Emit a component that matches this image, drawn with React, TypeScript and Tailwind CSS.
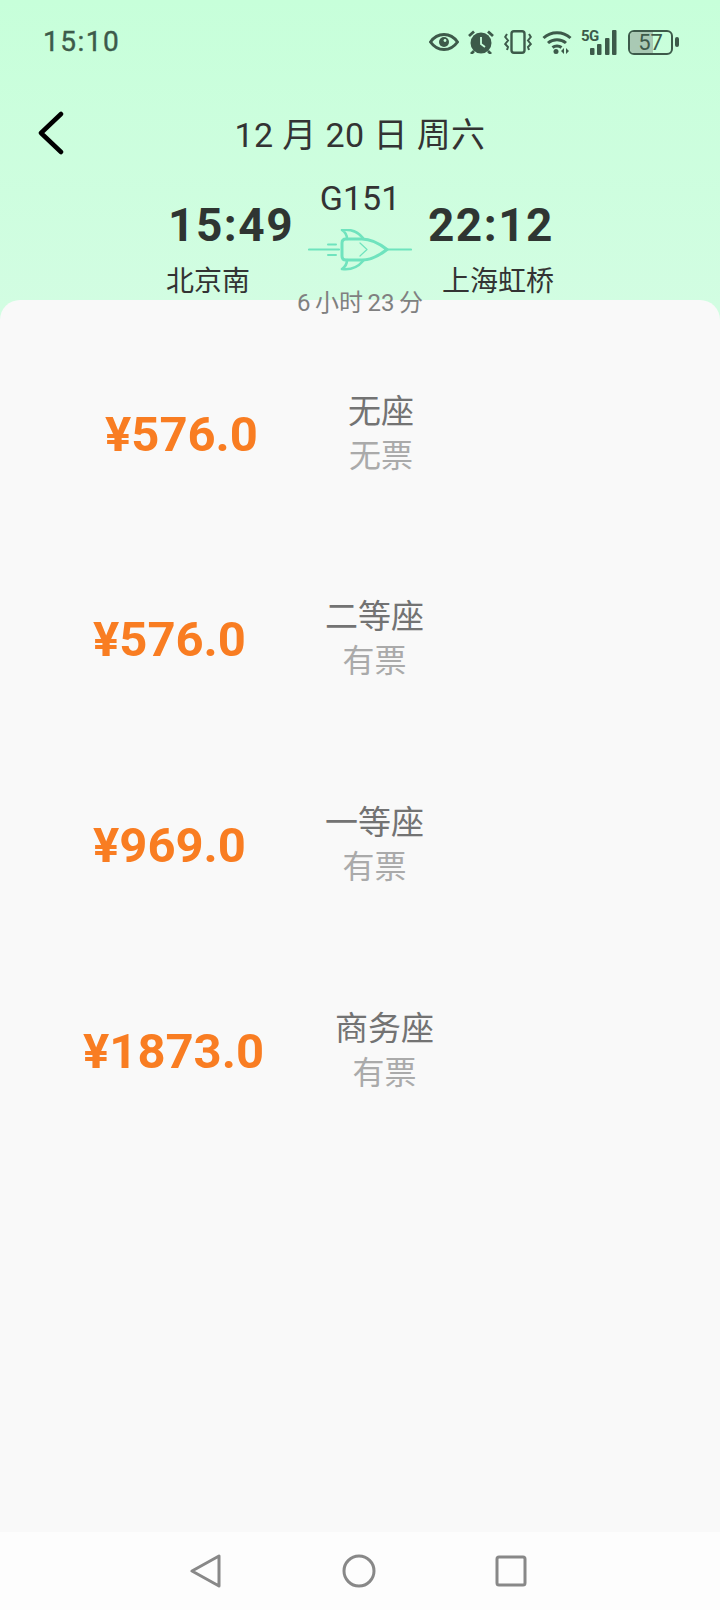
const font = "font-['Roboto','Noto_Sans_CJK_SC',sans-serif]";

const tickets = [
  { price: "¥576.0", seat: "无座", left: "无票", row: "pl-[105px] gap-[90px] h-[88px] mb-[117px]" },
  { price: "¥576.0", seat: "二等座", left: "有票", row: "pl-[93px] gap-[79px] h-[88px] mb-[118px]" },
  { price: "¥969.0", seat: "一等座", left: "有票", row: "pl-[93px] gap-[79px] h-[88px] mb-[118px]" },
  { price: "¥1873.0", seat: "商务座", left: "有票", row: "pl-[83px] gap-[71px] h-[88px]" },
];

const StatusIcons = () => (
  <div className="flex items-center text-[#3d5a4a]">
    <svg width="30" height="18" viewBox="0 0 30 18" className="mr-[9px]">
      <path d="M1.500 9C5 4 9.500 1.500 15 1.500S25 4 28.500 9C25 14 20.500 16.500 15 16.500S5 14 1.500 9Z" fill="none" stroke="currentColor" strokeWidth="3" />
      <circle cx="15" cy="9" r="5" fill="currentColor" />
      <circle cx="16" cy="7.500" r="1.400" fill="#c8ffdc" />
    </svg>
    <svg width="26" height="24" viewBox="0 0 26 24" className="mr-[10px]">
      <circle cx="13" cy="13" r="10.500" fill="currentColor" />
      <path d="M13 7v7l4 3" fill="none" stroke="#c8ffdc" strokeWidth="1.800" />
      <path d="M1 6 6 1.500M25 6 20 1.500M6 21l-3 3M20 21l3 3" stroke="currentColor" strokeWidth="2.800" />
    </svg>
    <svg width="28" height="24" viewBox="0 0 28 24" className="mr-[10px]">
      <rect x="7.500" y="1.200" width="13" height="21.600" rx="2.500" fill="none" stroke="currentColor" strokeWidth="2.400" />
      <path d="M3 4 1.200 7 4 10.500 1.200 14 4 17 3 20M25 4l1.800 3L24 10.500l2.800 3.500L24 17l1 3" fill="none" stroke="currentColor" strokeWidth="2" />
    </svg>
    <svg width="30" height="24" viewBox="0 0 30 24" className="mr-[9px]">
      <path d="M1.500 8C9 1 21 1 28.500 8M6 13c5-4.500 13-4.500 18 0M10.500 17.500c2.500-2 6.500-2 9 0" fill="none" stroke="currentColor" strokeWidth="3" />
      <circle cx="14" cy="21.500" r="2.500" fill="currentColor" />
      <path d="M22 18v6l-3-3ZM24 18v6l3-3Z" fill="currentColor" />
    </svg>
    <div className="relative w-[36px] h-[25px] mr-[11px]">
      <span className="absolute left-0 -top-[1px] text-[15px] leading-[15px] font-bold font-['Roboto',sans-serif] tracking-[-0.5px]">5G</span>
      <svg width="36" height="25" viewBox="0 0 36 25" className="absolute inset-0">
        <rect x="9" y="18" width="4.500" height="7" rx="1" fill="currentColor" />
        <rect x="16" y="14" width="4.500" height="11" rx="1" fill="currentColor" />
        <rect x="24" y="8" width="4.500" height="17" rx="1" fill="currentColor" />
        <rect x="31" y="0" width="4.500" height="25" rx="1" fill="currentColor" />
      </svg>
    </div>
    <div className="relative w-[45px] h-[25px] rounded-[6px] border-2 border-[#3d5a4a] overflow-hidden">
      <div className="absolute left-0 top-0 bottom-0 w-[57%] bg-[#a9c9b4]" />
      <span className="absolute inset-0 text-center text-[22px] leading-[21px] font-['Roboto',sans-serif] text-[#3d5a4a]">57</span>
    </div>
    <div className="ml-[2px] w-[4px] h-[10px] rounded-[2px] bg-[#3d5a4a]" />
  </div>
);

const TrainIcon = () => (
  <svg width="104" height="42" viewBox="0 0 104 42" className="text-[#6fe3be]">
    <g fill="none" stroke="currentColor" strokeLinejoin="round" strokeLinecap="round">
      <path d="M1 20.500H31M80 20.500H103" strokeWidth="2.200" />
      <path d="M20 15.500H28M20 26H28" strokeWidth="2" />
      <path d="M38 10H54C64 10 72 15 79 20.500C72 26 64 31 54 31H38Q34 31 34 27V14Q34 10 38 10Z" strokeWidth="3" />
      <path d="M39 10C39 6 37 3 34 1C42 0 50 3 55 9M39 31C39 35 37 38 34 40C42 41 50 38 55 32" strokeWidth="2.600" />
      <path d="M52 14L59 20.500L52 27" strokeWidth="1.200" />
    </g>
  </svg>
);

export default function App() {
  return (
    <div className={`${font} w-[720px] h-[1610px] flex flex-col bg-gradient-to-b from-[#c7ffda] to-[#d2fde2] to-[19%] overflow-hidden`}>
      {/* status bar */}
      <div className="h-[84px] flex items-center justify-between pl-[43px] pr-[41px]">
        <span className="text-[28px] leading-none tracking-[1.5px] text-[#3d5a4a] [-webkit-text-stroke:0.4px_#3d5a4a]">15:10</span>
        <StatusIcons />
      </div>

      {/* title */}
      <div className="relative h-[100px] flex items-center justify-center pt-[2px]">
        <svg width="28" height="44" viewBox="0 0 28 44" fill="none" stroke="#000" strokeWidth="4.500" strokeLinecap="round" strokeLinejoin="round" className="absolute left-[37px] top-[27px]">
          <path d="M24 3 4 22 24 41" />
        </svg>
        <span className="text-[34px] leading-none text-[#333] tracking-[0.4px]">12 月 20 日 周六</span>
      </div>

      {/* journey */}
      <div className="relative z-10 h-[116px] flex justify-center gap-[4px]">
        <div className="w-[130px] flex flex-col items-start pt-[17px] pl-[2px]">
          <span className="text-[46px] leading-[48px] font-bold text-[#2f3532] tracking-[1.5px]">15:49</span>
          <span className="mt-[17px] -ml-[2px] text-[28px] leading-[32px] text-[#333]">北京南</span>
        </div>
        <div className="w-[120px] flex flex-col items-center -mt-[6px]">
          <span className="text-[34px] leading-[40px] text-[#333]">G151</span>
          <span className="mt-[11px] flex"><TrainIcon /></span>
          <span className="mt-[18px] text-[24px] leading-[28px] text-[#808080] whitespace-nowrap [word-spacing:-1.5px]">6 小时 23 分</span>
        </div>
        <div className="w-[130px] flex flex-col items-end pt-[17px]">
          <span className="text-[46px] leading-[48px] font-bold text-[#2f3532] tracking-[1.5px]">22:12</span>
          <span className="mt-[17px] text-[28px] leading-[32px] text-[#333] whitespace-nowrap">上海虹桥</span>
        </div>
      </div>

      {/* tickets */}
      <div className="flex-1 bg-[#f9f9f9] rounded-t-[20px] pt-[90px]">
        {tickets.map((t) => (
          <div key={t.seat} className={`flex items-center ${t.row}`}>
            <span className="text-[49px] leading-none font-bold text-[#f97d22]">{t.price}</span>
            <div className="flex flex-col items-center">
              <span className="text-[33px] leading-[44px] text-[#737373]">{t.seat}</span>
              <span className="text-[32px] leading-[44px] text-[#aaaaaa]">{t.left}</span>
            </div>
          </div>
        ))}
      </div>

      {/* nav bar */}
      <div className="h-[78px] bg-[#fdfdfd] flex items-center justify-center pr-[3px]">
        <svg width="32" height="36" viewBox="0 0 32 36" fill="none" stroke="#888" strokeWidth="3" strokeLinejoin="round">
          <path d="M29 3V33L2 18Z" />
        </svg>
        <svg width="34" height="34" viewBox="0 0 34 34" fill="none" stroke="#888" strokeWidth="3" className="ml-[120px] mr-[119px]">
          <circle cx="17" cy="17" r="15" />
        </svg>
        <svg width="32" height="32" viewBox="0 0 32 32" fill="none" stroke="#888" strokeWidth="3" strokeLinejoin="round">
          <rect x="2" y="2" width="28" height="28" rx="2" />
        </svg>
      </div>
    </div>
  );
}
